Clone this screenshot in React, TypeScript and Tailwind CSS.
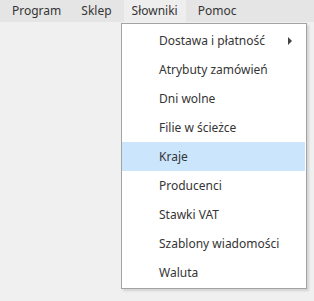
import React from 'react';

const topItems = ['Program', 'Sklep', 'Słowniki', 'Pomoc'];

const menuItems = [
  { label: 'Dostawa i płatność', sub: true },
  { label: 'Atrybuty zamówień' },
  { label: 'Dni wolne' },
  { label: 'Filie w ścieżce' },
  { label: 'Kraje', active: true },
  { label: 'Producenci' },
  { label: 'Stawki VAT' },
  { label: 'Szablony wiadomości' },
  { label: 'Waluta' },
];

const App: React.FC = () => {
  return (
    <div
      className="relative w-[314px] h-[301px] bg-[#f0f0f0] overflow-hidden text-[12px] text-[#353535]"
      style={{ fontFamily: '"Noto Sans", "Open Sans", sans-serif' }}
    >
      {/* Menu bar */}
      <div className="h-[22px] bg-[#e5e5e5] flex items-stretch pl-[4px] gap-[4px]">
        {topItems.map((item) => (
          <div
            key={item}
            className={`flex items-center px-[8px] ${item === 'Słowniki' ? 'bg-[#eeeeee]' : ''}`}
          >
            {item}
          </div>
        ))}
      </div>

      {/* Dropdown */}
      <div className="absolute left-[121px] top-[23px] w-[186px] bg-white border border-[#a3a3a3] pt-[2px] pb-[1px] shadow-[2px_2px_2px_rgba(0,0,0,0.12)]">
        {menuItems.map((item) => (
          <div
            key={item.label}
            className={`relative h-[29px] mr-[1px] flex items-center pl-[37px] ${
              item.active ? 'bg-[#cbe5fd]' : ''
            }`}
          >
            {item.label}
            {item.sub && (
              <span className="absolute right-[13px] top-[11px] w-0 h-0 border-y-[4px] border-y-transparent border-l-[4px] border-l-[#444]" />
            )}
          </div>
        ))}
      </div>
    </div>
  );
};

export default App;
